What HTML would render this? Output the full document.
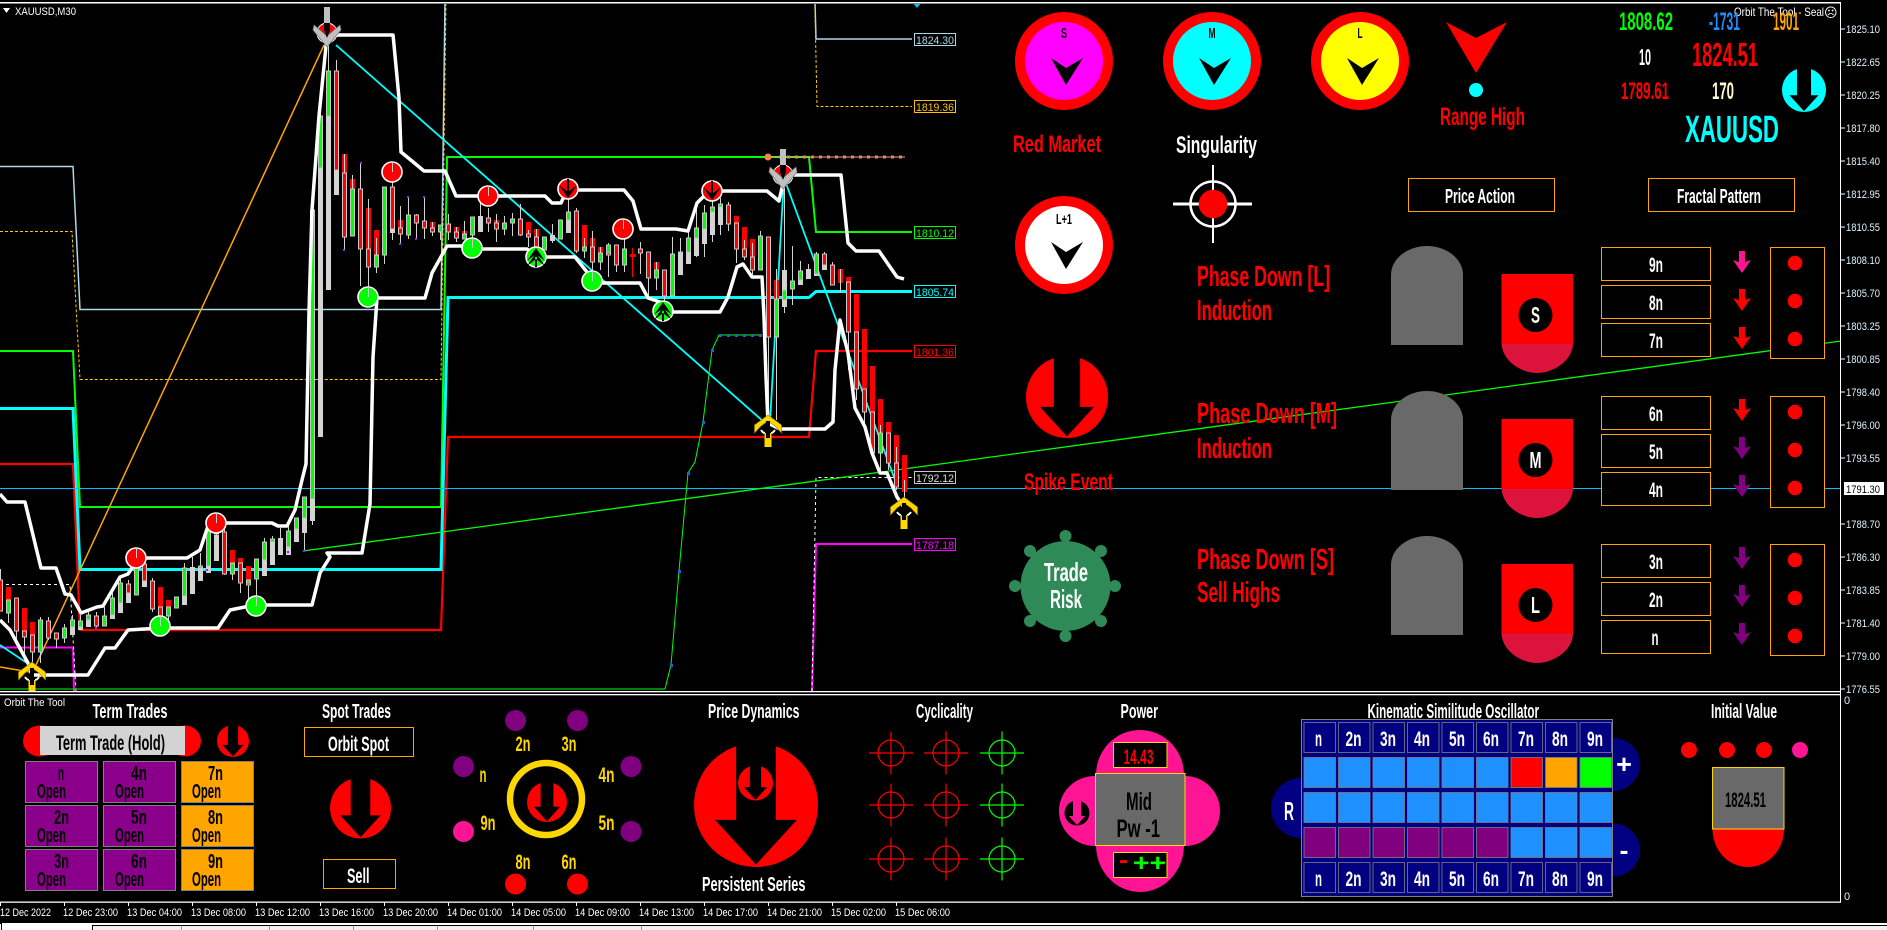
<!DOCTYPE html>
<html lang="en">
<head>
<meta charset="utf-8">
<title>XAUUSD,M30</title>
<style>
html,body{margin:0;padding:0;background:#000;width:1887px;height:930px;overflow:hidden}
svg{display:block}
text{font-family:"Liberation Sans",sans-serif}
.b{font-weight:bold}
.ax{font-size:11px;fill:#dff3ff}
.tm{font-size:11px;fill:#fff}
.lv{font-size:11px}
.w{fill:#fff;font-weight:bold}
.r{fill:#f00;font-weight:bold}
.k{fill:#000;font-weight:bold}
.g{fill:#ffd700;font-weight:bold}
</style>
</head>
<body>
<svg width="1887" height="930" viewBox="0 0 1887 930" xmlns="http://www.w3.org/2000/svg">
<defs>
<clipPath id="cc"><rect x="0" y="4" width="1840" height="687"/></clipPath>
<g id="ar"><ellipse rx="50" ry="50" fill="currentColor"/><path d="M-16-52H16V12H33L0 48-33 12H-16Z" fill="#000"/></g>
<g id="ap"><ellipse rx="50" ry="50" fill="#000"/><path d="M-16-52H16V12H33L0 48-33 12H-16Z" fill="#ff1493"/></g>
<path id="dart" d="M-14-3L1 7 18-3 1 24Z" fill="#000"/>
<path id="da" d="M-3-11h6v11l6-2-9 13-9-13 6 2z"/>
<g id="up"><path d="M-7 0Q-5 3-3 3M7 0Q5 3 3 3" stroke="#fff" stroke-width="2" fill="none"/><path d="M0-15L13.500-5V3L7-4 0-9-7-4-13.500 3V-5Z" fill="#ffd700" stroke="#a07a00" stroke-width=".6"/><path d="M-3.500 3H3.500V17H-3.500Z" fill="#ffd700"/><path d="M-2-9H2V8H-2Z" fill="#000"/></g>
<g id="dn"><circle r="10" fill="#f00" stroke="#fff" stroke-width="1"/><path d="M0 14L14-3 13-8 0 3-13-8-14-3Z" fill="#c0c0c0" stroke="#777" stroke-width=".7"/><path d="M-3-3L0 5 3-3V-12H-3Z" fill="#000"/><path d="M-3-26H3V-10H-3Z" fill="#c0c0c0"/></g>
<g id="rc"><circle r="10" fill="#f00" stroke="#fff" stroke-width="1.600"/></g>
<g id="gc"><circle r="10" fill="#0f0" stroke="#fff" stroke-width="1.600"/></g>
<g id="rd"><circle r="10" fill="#f00" stroke="#fff" stroke-width="1.600"/><path d="M-9-4L0 3 9-4 0 9ZM-1-10H1V3H-1Z" fill="#000"/></g>
<g id="gu"><circle r="10" fill="#0f0" stroke="#fff" stroke-width="1.600"/><path d="M-9 4L0-3 9 4 0-9ZM-9 9L0 2 9 9 0-4ZM-1 0H1V10H-1Z" fill="#000"/></g>
<g id="tomb"><path d="M1391 345V275A36 29 0 0 1 1463 275V345Z" fill="#696969"/><path d="M1501.500 274H1573V344H1501.500Z" fill="#f00"/><path d="M1501.500 344H1573C1572 362 1552 373 1537 373 1522 373 1503 362 1501.500 344Z" fill="#dc143c"/><circle cx="1535.500" cy="315" r="17" fill="#000"/></g>
<g id="cr"><circle r="13" fill="none" stroke="currentColor" stroke-width="1.200"/><path d="M-22 0H22M0-21.500V21.500" stroke="currentColor" stroke-width="1.200"/></g>
<g id="bx"><g fill="#000" stroke="#ffa500" stroke-width="1"><rect x="1601.500" y="247.500" width="109" height="33"/><rect x="1601.500" y="285.500" width="109" height="33"/><rect x="1601.500" y="323.500" width="109" height="33"/><rect x="1770.500" y="247.500" width="54" height="111"/></g><g fill="#f00"><circle cx="1795" cy="263" r="7.300"/><circle cx="1795" cy="301" r="7.300"/><circle cx="1795" cy="339" r="7.300"/></g></g>
</defs>

<!-- frame -->
<rect x="0" y="2" width="1841" height="1.500" fill="#fff"/>

<!-- chart -->
<g clip-path="url(#cc)">
<g fill="none">
<path d="M0 166.500H73L80 309.500H441L445 2" stroke="#add8e6" stroke-width="1.500"/>
<path d="M815 2L816 39H912" stroke="#add8e6" stroke-width="1.500"/>
<path d="M0 231.500H72L80 379.500H441L446 2" stroke="#ffc800" stroke-width="1" stroke-dasharray="3 2"/>
<path d="M815 10L817 106.500H912" stroke="#ffc800" stroke-width="1" stroke-dasharray="3 2"/>
<path d="M0 351H73L80 507H441L447 157H809L816 232H912" stroke="#0f0" stroke-width="2"/>
<path d="M0 464H73L80 630H441L448 437H809L816 351H912" stroke="#f00" stroke-width="2.200"/>
<path d="M0 647.500H73L74 691" stroke="#f0f" stroke-width="2"/>
<path d="M812 691L816 544H912" stroke="#f0f" stroke-width="2"/>
<path d="M0 584.500H70L76 691" stroke="#fff" stroke-width="1" stroke-dasharray="3 3"/>
<path d="M812 691L816 477.500H912" stroke="#fff" stroke-width="1" stroke-dasharray="3 3"/>
<path d="M0 408.500H73L80 569.500H441L448 297.500H809L816 291.500H912" stroke="#0ff" stroke-width="3"/>
<path d="M0 488.500H1840" stroke="#00bfff" stroke-width="1"/>
<path d="M303 551L1841 341" stroke="#0f0" stroke-width="1.300"/>
<path d="M0 667L30 672M36 665L324 45" stroke="#ffa500" stroke-width="1.500"/>
<path d="M0 645L30 665M336 45L764 422M770 422L784 178L895 480" stroke="#0ff" stroke-width="1.800"/>
<path d="M0 689H665L671 665 679 571 688 473 695 462 703 422 712 350 719 335H761" stroke="#0f0" stroke-width="1"/>
<path d="M768 157H905" stroke="#f4a58a" stroke-width="1"/>
</g>
<g fill="#fa8050"><circle cx="768" cy="157" r="3.500"/><path d="M779 155.500h3v3h-3zM787 155.500h3v3h-3zM795 155.500h3v3h-3zM803 155.500h3v3h-3zM811 155.500h3v3h-3zM819 155.500h3v3h-3zM827 155.500h3v3h-3zM835 155.500h3v3h-3zM843 155.500h3v3h-3zM851 155.500h3v3h-3zM859 155.500h3v3h-3zM867 155.500h3v3h-3zM875 155.500h3v3h-3zM883 155.500h3v3h-3zM891 155.500h3v3h-3zM899 155.500h3v3h-3z"/></g>
<path d="M719 334h3v3h-3zM727 334h3v3h-3zM735 334h3v3h-3zM743 334h3v3h-3zM751 334h3v3h-3zM759 334h3v3h-3zM711 349h3v3h-3zM702 421h3v3h-3zM687 472h3v3h-3zM678 570h3v3h-3zM670 664h3v3h-3z" fill="#2060e0"/>
<path d="M917 8L912 2H922Z" fill="#00bfff"/>

<!-- candles -->
<g shape-rendering="crispEdges">
<path fill="#d3d3d3" d="M70 627h5V635h-5zM78 627h5V630h-5zM86 620h5V627h-5zM110 615h5V619h-5zM118 603h5V613h-5zM126 593h5V603h-5zM142 581h5V587h-5zM182 596h5V605h-5zM190 567h5V594h-5zM198 568h5V581h-5zM206 566h5V573h-5zM214 535h5V561h-5zM262 560h5V576h-5zM270 542h5V565h-5zM278 538h5V555h-5zM286 547h5V555h-5zM294 529h5V542h-5zM302 518h5V533h-5zM310 499h5V521h-5zM318 168h5V437h-5zM326 116h5V290h-5zM334 170h5V195h-5zM390 229h5V233h-5zM478 216h5V232h-5zM550 235h5V241h-5zM566 220h5V233h-5zM678 253h5V275h-5zM686 252h5V264h-5zM694 238h5V256h-5zM702 229h5V244h-5zM710 212h5V235h-5zM718 207h5V225h-5zM782 270h5V307h-5zM798 280h5V285h-5zM806 269h5V279h-5zM814 274h5V276h-5zM822 265h5V270h-5z"/>
<path fill="#f00" d="M6 587h5V600h-5zM22 608h5V631h-5zM30 622h5V635h-5zM158 587h5V607h-5zM166 600h5V607h-5zM230 550h5V563h-5zM238 558h5V563h-5zM246 566h5V580h-5zM342 154h5V173h-5zM350 179h5V189h-5zM366 208h5V249h-5zM374 230h5V255h-5zM398 220h5V228h-5zM430 222h5V228h-5zM454 227h5V232h-5zM462 231h5V234h-5zM494 220h5V223h-5zM526 222h5V234h-5zM534 229h5V237h-5zM582 225h5V247h-5zM590 238h5V247h-5zM598 247h5V253h-5zM654 262h5V270h-5zM734 216h5V223h-5zM742 227h5V249h-5zM750 239h5V257h-5zM774 280h5V299h-5zM838 269h5V283h-5zM846 277h5V282h-5zM854 294h5V332h-5zM862 329h5V389h-5zM870 366h5V412h-5zM878 399h5V433h-5zM886 422h5V433h-5zM894 435h5V463h-5zM902 455h5V492h-5z"/>
<path fill="none" stroke="#d3d3d3" d="M.5 569V611M8.500 600V623M16.500 598V643M24.500 631V662M32.500 635V662M40.500 617V663M48.500 617V640M56.500 633V648M64.500 624V643M72.500 615V635M80.500 615V630M88.500 612V627M96.500 612V628M104.500 607V626M112.500 593V619M120.500 577V613M128.500 580V603M136.500 558V595M144.500 560V587M152.500 578V612M160.500 607V626M168.500 607V620M184.500 563V605M192.500 557V594M200.500 553V581M208.500 528V573M216.500 528V561M224.500 528V575M232.500 563V580M240.500 563V593M248.500 580V605M256.500 559V605M264.500 538V576M272.500 536V565M280.500 528V555M288.500 520V552M296.500 518V542M304.500 497V550M312.500 205V525M320.500 100V437M328.500 15V290M336.500 60V195M344.500 154V250M352.500 175V236M360.500 163V286M368.500 199V287M376.500 238V273M384.500 187V264M392.500 173V240M400.500 206V244M408.500 197V239M416.500 214V239M424.500 197V239M432.500 222V236M440.500 225V240M448.500 214V240M456.500 227V242M464.500 221V239M472.500 217V240M480.500 200V232M488.500 208V232M496.500 214V242M504.500 216V235M512.500 213V236M520.500 204V236M528.500 230V247M536.500 229V258M544.500 237V250M552.500 224V243M560.500 220V239M568.500 190V233M576.500 208V253M584.500 238V258M592.500 231V271M600.500 247V270M608.500 243V277M616.500 245V272M624.500 230V272M640.500 242V274M648.500 252V297M656.500 262V290M664.500 270V320M672.500 237V296M680.500 238V275M688.500 228V264M696.500 202V257M704.500 205V257M712.500 192V242M720.500 198V235M728.500 202V231M736.500 223V263M744.500 240V260M752.500 243V276M760.500 231V270M768.500 237V440M776.500 269V420M784.500 160V313M792.500 246V305M800.500 261V285M808.500 264V279M816.500 252V276M824.500 252V270M832.500 262V285M840.500 269V293M848.500 282V370M856.500 332V400M864.500 389V430M872.500 412V455M880.500 425V472M888.500 433V470M896.500 447V490M904.500 480V512"/>
<path d="M632.500 248V277" stroke="#f00" fill="none"/><path d="M630 254h6v3h-6z" fill="#f00"/>
<path fill="#f00" stroke="#c8c8c8" d="M-1.500 580h4V611h-4zM14.500 598h4V631h-4zM22.500 631h4V637h-4zM30.500 635h4V652h-4zM46.500 621h4V638h-4zM54.500 633h4V639h-4zM94.500 616h4V626h-4zM126.500 584h4V593h-4zM142.500 564h4V581h-4zM150.500 581h4V609h-4zM158.500 607h4V616h-4zM214.500 531h4V534h-4zM222.500 532h4V574h-4zM238.500 563h4V583h-4zM246.500 583h4V585h-4zM334.500 71h4V170h-4zM342.500 173h4V237h-4zM358.500 189h4V249h-4zM366.500 249h4V267h-4zM390.500 187h4V229h-4zM398.500 228h4V234h-4zM414.500 215h4V223h-4zM422.500 221h4V228h-4zM430.500 228h4V232h-4zM446.500 224h4V232h-4zM454.500 232h4V238h-4zM486.500 218h4V223h-4zM494.500 223h4V229h-4zM518.500 219h4V235h-4zM526.500 234h4V237h-4zM534.500 237h4V248h-4zM574.500 211h4V251h-4zM590.500 247h4V262h-4zM606.500 253h4V255h-4zM614.500 245h4V265h-4zM638.500 249h4V253h-4zM646.500 252h4V278h-4zM662.500 270h4V296h-4zM726.500 205h4V224h-4zM734.500 223h4V249h-4zM742.500 249h4V257h-4zM750.500 257h4V270h-4zM766.500 237h4V337h-4zM822.500 254h4V265h-4zM830.500 265h4V285h-4zM846.500 282h4V332h-4zM854.500 332h4V389h-4zM862.500 389h4V412h-4zM870.500 412h4V453h-4zM886.500 433h4V463h-4zM894.500 463h4V487h-4z"/>
<path fill="#0f0" stroke="#c8c8c8" d="M6.500 600h4V613h-4zM38.500 620h4V652h-4zM62.500 628h4V638h-4zM70.500 620h4V627h-4zM78.500 621h4V627h-4zM86.500 615h4V620h-4zM102.500 616h4V626h-4zM110.500 598h4V615h-4zM118.500 583h4V603h-4zM134.500 565h4V595h-4zM166.500 607h4V616h-4zM174.500 597h4V608h-4zM182.500 568h4V596h-4zM198.500 566h4V568h-4zM206.500 531h4V566h-4zM230.500 563h4V574h-4zM246.500 580h4V583h-4zM254.500 559h4V579h-4zM262.500 542h4V560h-4zM270.500 539h4V542h-4zM286.500 531h4V547h-4zM294.500 518h4V529h-4zM302.500 497h4V518h-4zM310.500 210h4V499h-4zM318.500 116h4V168h-4zM326.500 71h4V116h-4zM350.500 189h4V236h-4zM374.500 255h4V267h-4zM382.500 187h4V255h-4zM406.500 215h4V235h-4zM438.500 225h4V232h-4zM462.500 234h4V239h-4zM470.500 217h4V235h-4zM502.500 223h4V229h-4zM510.500 219h4V223h-4zM542.500 237h4V250h-4zM558.500 220h4V239h-4zM566.500 212h4V220h-4zM582.500 247h4V251h-4zM598.500 253h4V262h-4zM606.500 245h4V253h-4zM622.500 249h4V265h-4zM654.500 270h4V278h-4zM670.500 254h4V296h-4zM678.500 252h4V253h-4zM686.500 238h4V252h-4zM694.500 228h4V238h-4zM702.500 213h4V229h-4zM710.500 207h4V212h-4zM718.500 204h4V207h-4zM758.500 236h4V270h-4zM774.500 299h4V337h-4zM782.500 290h4V300h-4zM790.500 281h4V289h-4zM798.500 271h4V280h-4zM814.500 254h4V274h-4zM878.500 433h4V453h-4z"/>
<path fill="#a020f0" d="M95 627h2v2h-2zM206 569h2v2h-2zM287 551h2v2h-2zM303 550h2v2h-2zM343 249h2v2h-2zM399 243h2v2h-2zM415 238h2v2h-2zM360 162h2v2h-2zM407 196h2v2h-2zM423 196h2v2h-2z"/>
</g>

<!-- white bands -->
<g fill="none" stroke="#fff" stroke-width="3.500" stroke-linejoin="round">
<path d="M0 494L7 502H25L41 568H56L65 594 71 595 81 613 97 607 103 606 120 577 128 574 135 563 147 558H187L200 550 209 523H272L278 526H287L295 510 302 480 306 464 309 312 312 210 319 116 327 36 339 35H393L394 45 399 98 401 152 412 161 424 171H445L456 196H545L552 203H561L567 190H624L633 201 641 229H676L688 231 697 203 709 191H767L779 201 785 175H841L848 243 856 251H879L897 277 904 279"/>
<path d="M0 620L10 630 17 643 28 663 32 675H88L105 648H115L128 630 160 628H218L230 610 255 605H312L320 573 330 557 327 553H362L370 504 373 357 377 298H425L432 273 447 246H463L473 249H527L536 257H575L587 272 600 283H640L648 298 660 302 673 312H720L728 297 737 267 743 264 752 277H762L764 317 766 377 768 423 780 429H825L833 422 835 370 840 320 848 353 855 408 865 427 872 453 880 473H887L897 497 904 507"/>
</g>

<!-- signals -->
<use href="#rc" x="136" y="558"/><use href="#rc" x="216" y="523"/><use href="#rc" x="392" y="172"/><use href="#rc" x="488" y="196"/><use href="#rc" x="623" y="229"/>
<use href="#gc" x="160" y="626"/><use href="#gc" x="256" y="606"/><use href="#gc" x="368" y="297"/><use href="#gc" x="472" y="248"/><use href="#gc" x="592" y="281"/>
<use href="#rd" x="568" y="189"/><use href="#rd" x="712" y="191"/>
<use href="#gu" x="536" y="257"/><use href="#gu" x="663" y="311"/>
<path d="M136.500 548V558M216.500 513V523M392.500 162V172M488.500 186V196M623.500 219V229M160.500 616V626M256.500 596V606M368.500 287V297M472.500 238V248M592.500 271V281" stroke="#c8c8c8"/>
<use href="#dn" x="327" y="33"/><use href="#dn" x="783" y="175"/>
<use href="#up" x="32" y="677"/><use href="#up" x="768" y="430"/><use href="#up" x="904" y="512"/>
</g>

<text x="15" y="15" fill="#fff" font-size="11" textLength="61" lengthAdjust="spacingAndGlyphs">XAUUSD,M30</text>
<path d="M3 8H10L6.500 13Z" fill="#fff"/>

<!-- level labels -->
<g fill="#000" stroke-width="1">
<rect x="914.500" y="33.500" width="41" height="12" stroke="#add8e6"/>
<rect x="914.500" y="100.500" width="41" height="12" stroke="#ffc000"/>
<rect x="914.500" y="226.500" width="41" height="12" stroke="#0f0"/>
<rect x="914.500" y="285.500" width="41" height="12" stroke="#0ff"/>
<rect x="914.500" y="345.500" width="41" height="12" stroke="#f00"/>
<rect x="914.500" y="471.500" width="41" height="12" stroke="#c8c8c8"/>
<rect x="914.500" y="538.500" width="41" height="12" stroke="#f0f"/>
</g>
<g class="lv">
<text x="916" y="44" fill="#add8e6" textLength="38" lengthAdjust="spacingAndGlyphs">1824.30</text>
<text x="916" y="111" fill="#ffc000" textLength="38" lengthAdjust="spacingAndGlyphs">1819.36</text>
<text x="916" y="237" fill="#0f0" textLength="38" lengthAdjust="spacingAndGlyphs">1810.12</text>
<text x="916" y="296" fill="#0ff" textLength="38" lengthAdjust="spacingAndGlyphs">1805.74</text>
<text x="916" y="356" fill="#f00" textLength="38" lengthAdjust="spacingAndGlyphs">1801.36</text>
<text x="916" y="482" fill="#ddd" textLength="38" lengthAdjust="spacingAndGlyphs">1792.12</text>
<text x="916" y="549" fill="#f0f" textLength="38" lengthAdjust="spacingAndGlyphs">1787.18</text>
</g>

<!-- right panel top -->
<circle cx="1064" cy="61" r="49" fill="#f00"/><circle cx="1064" cy="61" r="39" fill="#f0f"/>
<circle cx="1212" cy="61" r="49" fill="#f00"/><circle cx="1212" cy="61" r="39" fill="#0ff"/>
<circle cx="1360" cy="61" r="49" fill="#f00"/><circle cx="1360" cy="61" r="39" fill="#ff0"/>
<circle cx="1064" cy="245" r="49" fill="#f00"/><circle cx="1064" cy="245" r="39" fill="#fff"/>
<use href="#dart" x="1065" y="61"/><use href="#dart" x="1213" y="61"/><use href="#dart" x="1361" y="61"/><use href="#dart" x="1065" y="245"/>
<text x="1064" y="38" class="k" font-size="15" text-anchor="middle" textLength="6" lengthAdjust="spacingAndGlyphs">S</text>
<text x="1212" y="38" class="k" font-size="15" text-anchor="middle" textLength="7" lengthAdjust="spacingAndGlyphs">M</text>
<text x="1360" y="38" class="k" font-size="15" text-anchor="middle" textLength="5" lengthAdjust="spacingAndGlyphs">L</text>
<text x="1064" y="224" class="k" font-size="15" text-anchor="middle" textLength="16" lengthAdjust="spacingAndGlyphs">L+1</text>

<path d="M1446 22L1476 38 1507 22 1476 73Z" fill="#f00"/>
<circle cx="1476" cy="90" r="7" fill="#0ff"/>
<text x="1440" y="125" class="r" font-size="25" textLength="85" lengthAdjust="spacingAndGlyphs">Range High</text>
<text x="1013" y="152" class="r" font-size="24" textLength="88" lengthAdjust="spacingAndGlyphs">Red Market</text>
<text x="1176" y="153" class="w" font-size="24" textLength="81" lengthAdjust="spacingAndGlyphs">Singularity</text>

<g stroke="#fff" fill="none"><circle cx="1213" cy="204" r="22.500" stroke-width="2.500"/><path d="M1173 204H1252" stroke-width="3"/><path d="M1213 165V243" stroke-width="2"/></g>
<circle cx="1213" cy="204" r="14.300" fill="#f00"/>

<g fill="none" stroke="#ffa500" stroke-width="1"><rect x="1408.500" y="178.500" width="146" height="33"/><rect x="1648.500" y="178.500" width="146" height="33"/></g>
<text x="1445" y="203" class="w" font-size="20" textLength="70" lengthAdjust="spacingAndGlyphs">Price Action</text>
<text x="1677" y="203" class="w" font-size="20" textLength="84" lengthAdjust="spacingAndGlyphs">Fractal Pattern</text>

<text x="1734" y="16" fill="#fff" font-size="12" textLength="90" lengthAdjust="spacingAndGlyphs">Orbit The Tool - Seal</text>
<text x="1824" y="17" fill="#fff" font-size="13" style="font-family:'DejaVu Sans',sans-serif">☹</text>
<g font-weight="bold">
<text x="1619" y="30" fill="#0f0" font-size="25" textLength="54" lengthAdjust="spacingAndGlyphs">1808.62</text>
<text x="1709" y="30" fill="#1e90ff" font-size="25" textLength="31" lengthAdjust="spacingAndGlyphs">-1731</text>
<text x="1773" y="30" fill="#ffa500" font-size="25" textLength="26" lengthAdjust="spacingAndGlyphs">1901</text>
<text x="1639" y="65" fill="#fff" font-size="23" textLength="12" lengthAdjust="spacingAndGlyphs">10</text>
<text x="1692" y="66" fill="#f00" font-size="33" textLength="66" lengthAdjust="spacingAndGlyphs">1824.51</text>
<text x="1621" y="99" fill="#f00" font-size="24" textLength="48" lengthAdjust="spacingAndGlyphs">1789.61</text>
<text x="1712" y="99" fill="#fffacd" font-size="24" textLength="22" lengthAdjust="spacingAndGlyphs">170</text>
<text x="1685" y="142" fill="#0ff" font-size="38" textLength="94" lengthAdjust="spacingAndGlyphs">XAUUSD</text>
</g>
<use href="#ar" transform="translate(1804 90) scale(.44)" color="#0ff"/>

<use href="#ar" transform="translate(1067 397) scale(.82)" color="#f00"/>
<text x="1024" y="490" class="r" font-size="24" textLength="89" lengthAdjust="spacingAndGlyphs">Spike Event</text>

<g fill="#2e8b57"><circle cx="1065.500" cy="586" r="45"/><circle cx="1065.500" cy="536" r="6"/><circle cx="1065.500" cy="636" r="6"/><circle cx="1015" cy="586" r="6"/><circle cx="1115" cy="586" r="6"/><circle cx="1030" cy="551" r="6"/><circle cx="1101" cy="551" r="6"/><circle cx="1030" cy="621" r="6"/><circle cx="1101" cy="621" r="6"/></g>
<text x="1066" y="581" class="w" font-size="26" text-anchor="middle" textLength="44" lengthAdjust="spacingAndGlyphs">Trade</text>
<text x="1066" y="608" class="w" font-size="26" text-anchor="middle" textLength="32" lengthAdjust="spacingAndGlyphs">Risk</text>

<g class="r" font-size="29">
<text x="1197" y="286" textLength="133" lengthAdjust="spacingAndGlyphs">Phase Down [L]</text>
<text x="1197" y="320" textLength="75" lengthAdjust="spacingAndGlyphs">Induction</text>
<text x="1197" y="423" textLength="140" lengthAdjust="spacingAndGlyphs">Phase Down [M]</text>
<text x="1197" y="458" textLength="75" lengthAdjust="spacingAndGlyphs">Induction</text>
<text x="1197" y="569" textLength="137" lengthAdjust="spacingAndGlyphs">Phase Down [S]</text>
<text x="1197" y="602" textLength="83" lengthAdjust="spacingAndGlyphs">Sell Highs</text>
</g>

<use href="#tomb"/><use href="#tomb" y="145"/><use href="#tomb" y="290"/>
<g class="w" font-size="23" text-anchor="middle">
<text x="1535.500" y="323" textLength="9" lengthAdjust="spacingAndGlyphs">S</text>
<text x="1535.500" y="468" textLength="12" lengthAdjust="spacingAndGlyphs">M</text>
<text x="1535.500" y="613" textLength="9" lengthAdjust="spacingAndGlyphs">L</text>
</g>

<use href="#bx"/><use href="#bx" y="149"/><use href="#bx" y="297"/>
<g class="w" font-size="21" text-anchor="middle">
<text x="1656" y="272" textLength="14" lengthAdjust="spacingAndGlyphs">9n</text>
<text x="1656" y="310" textLength="14" lengthAdjust="spacingAndGlyphs">8n</text>
<text x="1656" y="348" textLength="14" lengthAdjust="spacingAndGlyphs">7n</text>
<text x="1656" y="421" textLength="14" lengthAdjust="spacingAndGlyphs">6n</text>
<text x="1656" y="459" textLength="14" lengthAdjust="spacingAndGlyphs">5n</text>
<text x="1656" y="497" textLength="14" lengthAdjust="spacingAndGlyphs">4n</text>
<text x="1656" y="569" textLength="14" lengthAdjust="spacingAndGlyphs">3n</text>
<text x="1656" y="607" textLength="14" lengthAdjust="spacingAndGlyphs">2n</text>
<text x="1655" y="645" textLength="7" lengthAdjust="spacingAndGlyphs">n</text>
</g>
<use href="#da" x="1742" y="262" fill="#ff1493"/>
<use href="#da" x="1742" y="300" fill="#f00"/>
<use href="#da" x="1742" y="338" fill="#f00"/>
<use href="#da" x="1742" y="410" fill="#f00"/>
<use href="#da" x="1742" y="448" fill="#800080"/>
<use href="#da" x="1742" y="486" fill="#800080"/>
<use href="#da" x="1742" y="558" fill="#800080"/>
<use href="#da" x="1742" y="596" fill="#800080"/>
<use href="#da" x="1742" y="634" fill="#800080"/>

<!-- price axis -->
<path d="M1840.500 3V902" stroke="#fff"/>
<path d="M1841 29h4M1841 62h4M1841 95h4M1841 128h4M1841 161h4M1841 194h4M1841 227h4M1841 260h4M1841 293h4M1841 326h4M1841 359h4M1841 392h4M1841 425h4M1841 458h4M1841 524h4M1841 557h4M1841 590h4M1841 623h4M1841 656h4M1841 689h4" stroke="#fff"/>
<g class="ax">
<text x="1846" y="33" textLength="34" lengthAdjust="spacingAndGlyphs">1825.10</text>
<text x="1846" y="66" textLength="34" lengthAdjust="spacingAndGlyphs">1822.65</text>
<text x="1846" y="99" textLength="34" lengthAdjust="spacingAndGlyphs">1820.25</text>
<text x="1846" y="132" textLength="34" lengthAdjust="spacingAndGlyphs">1817.80</text>
<text x="1846" y="165" textLength="34" lengthAdjust="spacingAndGlyphs">1815.40</text>
<text x="1846" y="198" textLength="34" lengthAdjust="spacingAndGlyphs">1812.95</text>
<text x="1846" y="231" textLength="34" lengthAdjust="spacingAndGlyphs">1810.55</text>
<text x="1846" y="264" textLength="34" lengthAdjust="spacingAndGlyphs">1808.10</text>
<text x="1846" y="297" textLength="34" lengthAdjust="spacingAndGlyphs">1805.70</text>
<text x="1846" y="330" textLength="34" lengthAdjust="spacingAndGlyphs">1803.25</text>
<text x="1846" y="363" textLength="34" lengthAdjust="spacingAndGlyphs">1800.85</text>
<text x="1846" y="396" textLength="34" lengthAdjust="spacingAndGlyphs">1798.40</text>
<text x="1846" y="429" textLength="34" lengthAdjust="spacingAndGlyphs">1796.00</text>
<text x="1846" y="462" textLength="34" lengthAdjust="spacingAndGlyphs">1793.55</text>
<text x="1846" y="528" textLength="34" lengthAdjust="spacingAndGlyphs">1788.70</text>
<text x="1846" y="561" textLength="34" lengthAdjust="spacingAndGlyphs">1786.30</text>
<text x="1846" y="594" textLength="34" lengthAdjust="spacingAndGlyphs">1783.85</text>
<text x="1846" y="627" textLength="34" lengthAdjust="spacingAndGlyphs">1781.40</text>
<text x="1846" y="660" textLength="34" lengthAdjust="spacingAndGlyphs">1779.00</text>
<text x="1846" y="693" textLength="34" lengthAdjust="spacingAndGlyphs">1776.55</text>
</g>
<rect x="1844" y="482" width="40" height="13" fill="#fff"/>
<text x="1846" y="493" fill="#000" font-size="11" textLength="34" lengthAdjust="spacingAndGlyphs">1791.30</text>
<text x="1844" y="704" fill="#dff3ff" font-size="11">0</text>
<text x="1844" y="900" fill="#dff3ff" font-size="11">0</text>

<!-- sub window -->
<rect x="0" y="691" width="1841" height="1.300" fill="#fff"/>
<rect x="0" y="694" width="1841" height="1.300" fill="#fff"/>
<rect x="0" y="901.500" width="1841" height="1.300" fill="#fff"/>

<text x="4" y="706" fill="#fff" font-size="11" textLength="61" lengthAdjust="spacingAndGlyphs">Orbit The Tool</text>
<g class="w" font-size="20">
<text x="92.500" y="718" textLength="75" lengthAdjust="spacingAndGlyphs">Term Trades</text>
<text x="322" y="718" textLength="69" lengthAdjust="spacingAndGlyphs">Spot Trades</text>
<text x="708" y="718" textLength="91.500" lengthAdjust="spacingAndGlyphs">Price Dynamics</text>
<text x="916" y="718" textLength="57" lengthAdjust="spacingAndGlyphs">Cyclicality</text>
<text x="1120.500" y="718" textLength="37.500" lengthAdjust="spacingAndGlyphs">Power</text>
<text x="1367.500" y="718" textLength="171.500" lengthAdjust="spacingAndGlyphs">Kinematic Similitude Oscillator</text>
<text x="1711" y="718" textLength="66" lengthAdjust="spacingAndGlyphs">Initial Value</text>
<text x="702" y="891" textLength="103.500" lengthAdjust="spacingAndGlyphs">Persistent Series</text>
</g>

<!-- term trades -->
<ellipse cx="40" cy="741" rx="17" ry="15.500" fill="#f00"/><ellipse cx="185" cy="741" rx="16" ry="15.500" fill="#f00"/>
<rect x="40" y="726" width="145" height="29" fill="#d3d3d3"/>
<text x="56" y="750" class="k" font-size="21" textLength="109" lengthAdjust="spacingAndGlyphs">Term Trade (Hold)</text>
<use href="#ar" transform="translate(233 741) scale(.32)" color="#f00"/>
<g stroke="#808080" stroke-width="1">
<g fill="#8b008b"><rect x="25.500" y="761.500" width="72" height="41"/><rect x="25.500" y="805.500" width="72" height="41"/><rect x="25.500" y="849.500" width="72" height="41"/><rect x="103.500" y="761.500" width="72" height="41"/><rect x="103.500" y="805.500" width="72" height="41"/><rect x="103.500" y="849.500" width="72" height="41"/></g>
<g fill="#ffa500"><rect x="181.500" y="761.500" width="72" height="41"/><rect x="181.500" y="805.500" width="72" height="41"/><rect x="181.500" y="849.500" width="72" height="41"/></g>
</g>
<g class="k" font-size="20">
<text x="58" y="780" textLength="6" lengthAdjust="spacingAndGlyphs">n</text><text x="37" y="798" textLength="29" lengthAdjust="spacingAndGlyphs">Open</text>
<text x="54" y="824" textLength="15" lengthAdjust="spacingAndGlyphs">2n</text><text x="37" y="842" textLength="29" lengthAdjust="spacingAndGlyphs">Open</text>
<text x="54" y="868" textLength="15" lengthAdjust="spacingAndGlyphs">3n</text><text x="37" y="886" textLength="29" lengthAdjust="spacingAndGlyphs">Open</text>
<text x="131" y="780" textLength="16" lengthAdjust="spacingAndGlyphs">4n</text><text x="115" y="798" textLength="29" lengthAdjust="spacingAndGlyphs">Open</text>
<text x="131" y="824" textLength="16" lengthAdjust="spacingAndGlyphs">5n</text><text x="115" y="842" textLength="29" lengthAdjust="spacingAndGlyphs">Open</text>
<text x="131" y="868" textLength="16" lengthAdjust="spacingAndGlyphs">6n</text><text x="115" y="886" textLength="29" lengthAdjust="spacingAndGlyphs">Open</text>
<text x="208" y="780" textLength="15" lengthAdjust="spacingAndGlyphs">7n</text><text x="192" y="798" textLength="29" lengthAdjust="spacingAndGlyphs">Open</text>
<text x="208" y="824" textLength="15" lengthAdjust="spacingAndGlyphs">8n</text><text x="192" y="842" textLength="29" lengthAdjust="spacingAndGlyphs">Open</text>
<text x="208" y="868" textLength="15" lengthAdjust="spacingAndGlyphs">9n</text><text x="192" y="886" textLength="29" lengthAdjust="spacingAndGlyphs">Open</text>
</g>

<!-- spot -->
<rect x="304.500" y="727.500" width="109" height="29" fill="none" stroke="#ffa500"/>
<text x="328" y="751" class="w" font-size="21" textLength="61" lengthAdjust="spacingAndGlyphs">Orbit Spot</text>
<use href="#ar" transform="translate(360.500 808) scale(.61)" color="#f00"/>
<rect x="323.500" y="859.500" width="72" height="29" fill="none" stroke="#ffa500"/>
<text x="347" y="883" class="w" font-size="21" textLength="22.500" lengthAdjust="spacingAndGlyphs">Sell</text>

<!-- ring -->
<g fill="#800080"><circle cx="515.500" cy="720.500" r="10.500"/><circle cx="577.500" cy="720.500" r="10.500"/><circle cx="463.500" cy="766.500" r="10.500"/><circle cx="631" cy="766.500" r="10.500"/><circle cx="631" cy="831.500" r="10.500"/></g>
<circle cx="463.500" cy="831.500" r="10.500" fill="#ff1493"/>
<circle cx="515.500" cy="884" r="10.500" fill="#f00"/><circle cx="577.500" cy="884" r="10.500" fill="#f00"/>
<g class="g" font-size="21" text-anchor="middle">
<text x="523" y="751" textLength="15" lengthAdjust="spacingAndGlyphs">2n</text>
<text x="569" y="751" textLength="15" lengthAdjust="spacingAndGlyphs">3n</text>
<text x="483" y="782" textLength="7" lengthAdjust="spacingAndGlyphs">n</text>
<text x="606.500" y="782" textLength="16" lengthAdjust="spacingAndGlyphs">4n</text>
<text x="488" y="830" textLength="15" lengthAdjust="spacingAndGlyphs">9n</text>
<text x="606.500" y="830" textLength="16" lengthAdjust="spacingAndGlyphs">5n</text>
<text x="523" y="869" textLength="15" lengthAdjust="spacingAndGlyphs">8n</text>
<text x="569" y="869" textLength="15" lengthAdjust="spacingAndGlyphs">6n</text>
</g>
<circle cx="546" cy="799" r="36" fill="none" stroke="#ffd700" stroke-width="6.500"/>
<use href="#ar" transform="translate(547 802) scale(.4)" color="#f00"/>

<!-- price dynamics -->
<use href="#ar" transform="translate(756 805) scale(1.240)" color="#f00"/>
<use href="#ar" transform="translate(755.500 783) scale(.35)" color="#f00"/>

<!-- cyclicality -->
<use href="#cr" x="891" y="753" color="#f00"/><use href="#cr" x="946" y="753" color="#f00"/><use href="#cr" x="1002" y="753" color="#0f0"/>
<use href="#cr" x="891" y="805" color="#f00"/><use href="#cr" x="946" y="805" color="#f00"/><use href="#cr" x="1002" y="805" color="#0f0"/>
<use href="#cr" x="891" y="859" color="#f00"/><use href="#cr" x="946" y="859" color="#f00"/><use href="#cr" x="1002" y="859" color="#0f0"/>

<!-- power -->
<g fill="#ff1493"><ellipse cx="1140" cy="775" rx="44" ry="45"/><ellipse cx="1140" cy="845" rx="44" ry="47"/><ellipse cx="1095" cy="811" rx="36" ry="35"/><ellipse cx="1185" cy="811" rx="35" ry="35"/></g>
<rect x="1095.500" y="773.500" width="89.500" height="72" fill="#696969" stroke="#ffd700"/>
<rect x="1113.500" y="742.500" width="53.500" height="25" fill="#000" stroke="#ffd700"/>
<rect x="1113.500" y="852.500" width="53.500" height="25" fill="#000" stroke="#ffd700"/>
<text x="1123.500" y="764" class="r" font-size="21" textLength="30" lengthAdjust="spacingAndGlyphs">14.43</text>
<text x="1119" y="868" class="r" font-size="24" textLength="9" lengthAdjust="spacingAndGlyphs">-</text>
<text x="1133" y="871" fill="#0f0" font-weight="bold" font-size="24" textLength="33" lengthAdjust="spacingAndGlyphs">++</text>
<text x="1126" y="810" class="k" font-size="25" textLength="26" lengthAdjust="spacingAndGlyphs">Mid</text>
<text x="1116.500" y="837" class="k" font-size="25" textLength="43.500" lengthAdjust="spacingAndGlyphs">Pw -1</text>
<use href="#ap" transform="translate(1077 813) scale(.25)"/>

<!-- KSO -->
<g fill="#000080"><ellipse cx="1613" cy="764.500" rx="27" ry="26.500"/><ellipse cx="1613" cy="850" rx="27" ry="26.500"/><ellipse cx="1301" cy="808" rx="30" ry="30"/></g>
<rect x="1301.500" y="719.500" width="311" height="177" fill="#000080" stroke="#808080"/>
<g stroke="#808080" stroke-width=".8">
<g fill="#000080">
<rect x="1304" y="722.500" width="31.500" height="30"/><rect x="1338.500" y="722.500" width="31.500" height="30"/><rect x="1373" y="722.500" width="31.500" height="30"/><rect x="1407.500" y="722.500" width="31.500" height="30"/><rect x="1442" y="722.500" width="31.500" height="30"/><rect x="1476.500" y="722.500" width="31.500" height="30"/><rect x="1511" y="722.500" width="31.500" height="30"/><rect x="1545.500" y="722.500" width="31.500" height="30"/><rect x="1580" y="722.500" width="31.500" height="30"/>
<rect x="1304" y="862.500" width="31.500" height="30"/><rect x="1338.500" y="862.500" width="31.500" height="30"/><rect x="1373" y="862.500" width="31.500" height="30"/><rect x="1407.500" y="862.500" width="31.500" height="30"/><rect x="1442" y="862.500" width="31.500" height="30"/><rect x="1476.500" y="862.500" width="31.500" height="30"/><rect x="1511" y="862.500" width="31.500" height="30"/><rect x="1545.500" y="862.500" width="31.500" height="30"/><rect x="1580" y="862.500" width="31.500" height="30"/>
</g>
<g fill="#1e90ff">
<rect x="1304" y="757.500" width="31.500" height="30"/><rect x="1338.500" y="757.500" width="31.500" height="30"/><rect x="1373" y="757.500" width="31.500" height="30"/><rect x="1407.500" y="757.500" width="31.500" height="30"/><rect x="1442" y="757.500" width="31.500" height="30"/><rect x="1476.500" y="757.500" width="31.500" height="30"/>
<rect x="1304" y="792.500" width="31.500" height="30"/><rect x="1338.500" y="792.500" width="31.500" height="30"/><rect x="1373" y="792.500" width="31.500" height="30"/><rect x="1407.500" y="792.500" width="31.500" height="30"/><rect x="1442" y="792.500" width="31.500" height="30"/><rect x="1476.500" y="792.500" width="31.500" height="30"/><rect x="1511" y="792.500" width="31.500" height="30"/><rect x="1545.500" y="792.500" width="31.500" height="30"/><rect x="1580" y="792.500" width="31.500" height="30"/>
<rect x="1511" y="827.500" width="31.500" height="30"/><rect x="1545.500" y="827.500" width="31.500" height="30"/><rect x="1580" y="827.500" width="31.500" height="30"/>
</g>
<rect x="1511" y="757.500" width="31.500" height="30" fill="#f00"/><rect x="1545.500" y="757.500" width="31.500" height="30" fill="#ffa500"/><rect x="1580" y="757.500" width="31.500" height="30" fill="#0f0"/>
<g fill="#800080"><rect x="1304" y="827.500" width="31.500" height="30"/><rect x="1338.500" y="827.500" width="31.500" height="30"/><rect x="1373" y="827.500" width="31.500" height="30"/><rect x="1407.500" y="827.500" width="31.500" height="30"/><rect x="1442" y="827.500" width="31.500" height="30"/><rect x="1476.500" y="827.500" width="31.500" height="30"/></g>
</g>
<g class="w" font-size="21" text-anchor="middle">
<text x="1318.500" y="746" textLength="7" lengthAdjust="spacingAndGlyphs">n</text><text x="1353.500" y="746" textLength="16" lengthAdjust="spacingAndGlyphs">2n</text><text x="1388" y="746" textLength="16" lengthAdjust="spacingAndGlyphs">3n</text><text x="1422" y="746" textLength="16" lengthAdjust="spacingAndGlyphs">4n</text><text x="1457" y="746" textLength="16" lengthAdjust="spacingAndGlyphs">5n</text><text x="1491" y="746" textLength="16" lengthAdjust="spacingAndGlyphs">6n</text><text x="1526" y="746" textLength="16" lengthAdjust="spacingAndGlyphs">7n</text><text x="1560" y="746" textLength="16" lengthAdjust="spacingAndGlyphs">8n</text><text x="1595" y="746" textLength="16" lengthAdjust="spacingAndGlyphs">9n</text>
<text x="1318.500" y="886" textLength="7" lengthAdjust="spacingAndGlyphs">n</text><text x="1353.500" y="886" textLength="16" lengthAdjust="spacingAndGlyphs">2n</text><text x="1388" y="886" textLength="16" lengthAdjust="spacingAndGlyphs">3n</text><text x="1422" y="886" textLength="16" lengthAdjust="spacingAndGlyphs">4n</text><text x="1457" y="886" textLength="16" lengthAdjust="spacingAndGlyphs">5n</text><text x="1491" y="886" textLength="16" lengthAdjust="spacingAndGlyphs">6n</text><text x="1526" y="886" textLength="16" lengthAdjust="spacingAndGlyphs">7n</text><text x="1560" y="886" textLength="16" lengthAdjust="spacingAndGlyphs">8n</text><text x="1595" y="886" textLength="16" lengthAdjust="spacingAndGlyphs">9n</text>
</g>
<text x="1289" y="820" class="w" font-size="26" text-anchor="middle" textLength="10" lengthAdjust="spacingAndGlyphs">R</text>
<text x="1624" y="773" class="w" font-size="26" text-anchor="middle" textLength="16" lengthAdjust="spacingAndGlyphs">+</text>
<text x="1624" y="859" class="w" font-size="26" text-anchor="middle" textLength="9" lengthAdjust="spacingAndGlyphs">-</text>

<!-- initial value -->
<circle cx="1689" cy="750" r="8" fill="#f00"/><circle cx="1727" cy="750" r="8" fill="#f00"/><circle cx="1764" cy="750" r="8" fill="#f00"/><circle cx="1800" cy="750" r="8" fill="#ff1493"/>
<path d="M1712.500 829H1784C1784 850 1768 867 1748 867 1728 867 1712.500 850 1712.500 829Z" fill="#f00"/>
<rect x="1712.500" y="767.500" width="71.500" height="61.500" fill="#696969" stroke="#ffd700"/>
<text x="1725" y="807" class="k" font-size="21" textLength="41" lengthAdjust="spacingAndGlyphs">1824.51</text>

<!-- time axis -->
<path d="M.5 902v4M64.500 902v4M128.500 902v4M192.500 902v4M256.500 902v4M320.500 902v4M384.500 902v4M448.500 902v4M512.500 902v4M576.500 902v4M640.500 902v4M704.500 902v4M768.500 902v4M832.500 902v4M896.500 902v4" stroke="#fff"/>
<g class="tm">
<text x="0" y="916" textLength="51" lengthAdjust="spacingAndGlyphs">12 Dec 2022</text>
<text x="63" y="916" textLength="55" lengthAdjust="spacingAndGlyphs">12 Dec 23:00</text>
<text x="127" y="916" textLength="55" lengthAdjust="spacingAndGlyphs">13 Dec 04:00</text>
<text x="191" y="916" textLength="55" lengthAdjust="spacingAndGlyphs">13 Dec 08:00</text>
<text x="255" y="916" textLength="55" lengthAdjust="spacingAndGlyphs">13 Dec 12:00</text>
<text x="319" y="916" textLength="55" lengthAdjust="spacingAndGlyphs">13 Dec 16:00</text>
<text x="383" y="916" textLength="55" lengthAdjust="spacingAndGlyphs">13 Dec 20:00</text>
<text x="447" y="916" textLength="55" lengthAdjust="spacingAndGlyphs">14 Dec 01:00</text>
<text x="511" y="916" textLength="55" lengthAdjust="spacingAndGlyphs">14 Dec 05:00</text>
<text x="575" y="916" textLength="55" lengthAdjust="spacingAndGlyphs">14 Dec 09:00</text>
<text x="639" y="916" textLength="55" lengthAdjust="spacingAndGlyphs">14 Dec 13:00</text>
<text x="703" y="916" textLength="55" lengthAdjust="spacingAndGlyphs">14 Dec 17:00</text>
<text x="767" y="916" textLength="55" lengthAdjust="spacingAndGlyphs">14 Dec 21:00</text>
<text x="831" y="916" textLength="55" lengthAdjust="spacingAndGlyphs">15 Dec 02:00</text>
<text x="895" y="916" textLength="55" lengthAdjust="spacingAndGlyphs">15 Dec 06:00</text>
</g>

<!-- status bar -->
<rect x="0" y="923" width="1887" height="2" fill="#fff"/>
<rect x="0" y="925" width="92" height="5" fill="#fff"/>
<rect x="92" y="925" width="1795" height="5" fill="#f0f0f0"/>
<path d="M0 923.500H1.500V930" fill="none" stroke="#000"/>
<path d="M92.500 930V925.500H1887" fill="none" stroke="#000"/>
<path d="M181.500 926v4M269.500 926v4M353.500 926v4M437.500 926v4M533.500 926v4M641.500 926v4" stroke="#999"/>
</svg>
</body>
</html>
